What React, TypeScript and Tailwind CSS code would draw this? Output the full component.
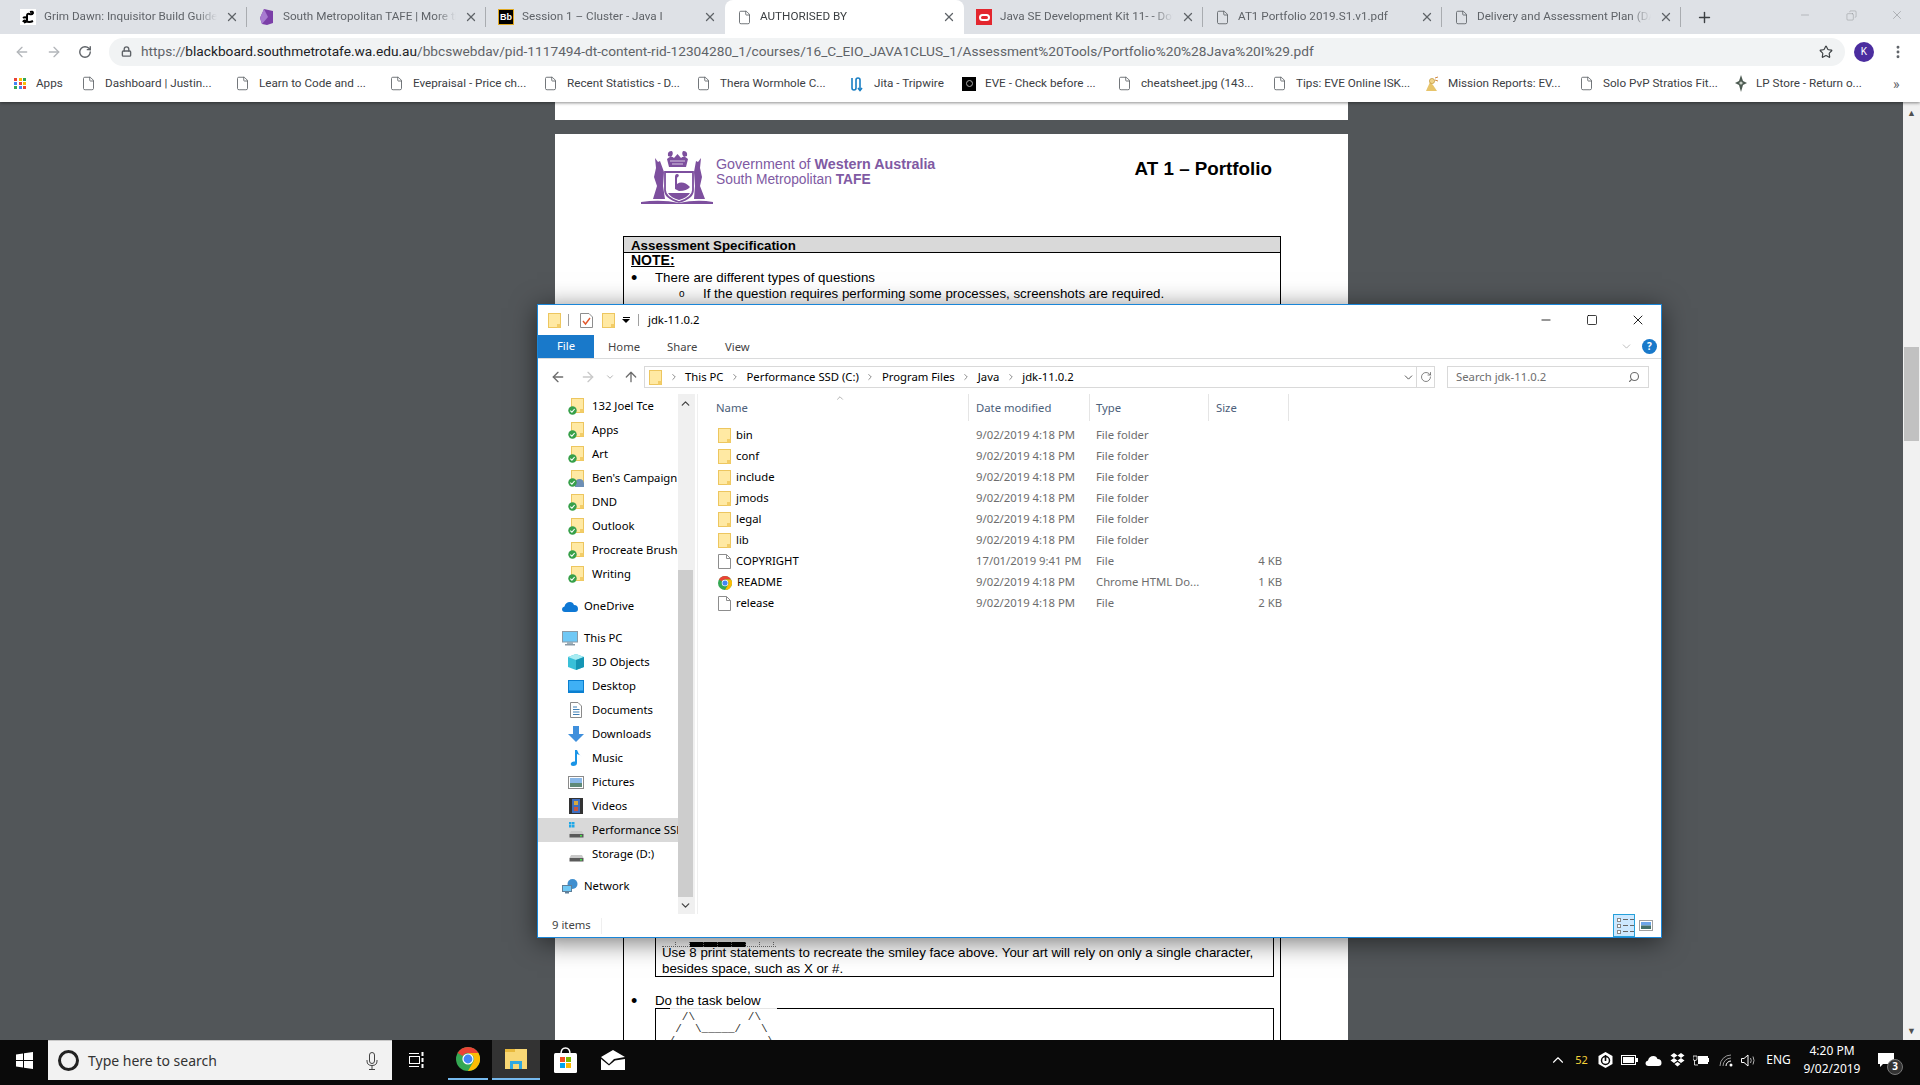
import {
  ArrowLeft,
  ArrowRight,
  ArrowUp,
  ChevronDown,
  ChevronRight,
  ChevronUp,
  Copy,
  File,
  Lock,
  Minus,
  MoreVertical,
  Plus,
  RotateCw,
  Search,
  Square,
  Star,
  X,
} from "lucide-react";
import type { ReactNode } from "react";

const chromeFont = "font-['Roboto',sans-serif]";
const winFont = "font-['Noto_Sans',sans-serif]";
const pdfFont = "font-['Liberation_Sans',Arial,sans-serif]";

function DocIcon({ className = "text-[#5f6368]" }: { className?: string }) {
  return <File size={15} strokeWidth={1.4} className={`shrink-0 ${className}`} />;
}

function GrimFav() {
  return (
    <div className="w-4 h-4 bg-white flex items-center justify-center shrink-0">
      <svg width="14" height="14" viewBox="0 0 14 14" fill="none" stroke="black" strokeWidth="2">
        <path d="M9 2 Q12 1 12 3 Q11 5 8.5 4 Q6 3 6 6 V10 Q6 12 3 12.5" />
        <path d="M2 8 Q4 6.5 6 8 M2 12 Q3 10 5 11 Q8 13 12 11" />
      </svg>
    </div>
  );
}

function TafeFav() {
  return (
    <svg width="16" height="16" viewBox="0 0 16 16" className="shrink-0">
      <path d="M5 0 L14 2 L14 14 L8 16 L3 15 L1 9 Z" fill="#7b3fa8" />
      <path d="M5 0 L9 8 L3 15 L1 9 Z" fill="#a77bd0" />
    </svg>
  );
}

function BbFav() {
  return (
    <div className="w-4 h-4 bg-black border border-[#e0a820] flex items-center justify-center shrink-0 text-white font-bold text-[9px] leading-none font-['Liberation_Sans',sans-serif]">
      Bb
    </div>
  );
}

function OracleFav() {
  return (
    <div className="w-4 h-4 bg-[#e3262e] flex items-center justify-center shrink-0">
      <div className="w-[11px] h-[7px] rounded-full border-2 border-white" />
    </div>
  );
}

const tabs: { title: string; icon: ReactNode; active?: boolean; sep?: boolean }[] = [
  { title: "Grim Dawn: Inquisitor Build Guide", icon: <GrimFav />, sep: true },
  { title: "South Metropolitan TAFE | More than", icon: <TafeFav />, sep: true },
  { title: "Session 1 – Cluster - Java I", icon: <BbFav /> },
  { title: "AUTHORISED BY", icon: <DocIcon />, active: true },
  { title: "Java SE Development Kit 11- - Downloads", icon: <OracleFav />, sep: true },
  { title: "AT1 Portfolio 2019.S1.v1.pdf", icon: <DocIcon />, sep: true },
  { title: "Delivery and Assessment Plan (DAP)", icon: <DocIcon />, sep: true },
];

function AppsGrid() {
  const colors = [
    "#ea4335", "#fbbc05", "#34a853",
    "#4285f4", "#ea4335", "#fbbc05",
    "#34a853", "#4285f4", "#ea4335",
  ];
  return (
    <div className="grid grid-cols-3 gap-[1px] w-[13px] shrink-0">
      {colors.map((c, i) => (
        <svg key={i} width="3" height="3" className="block">
          <rect width="3" height="3" fill={c} />
        </svg>
      ))}
    </div>
  );
}

function JitaIcon() {
  return (
    <svg width="16" height="16" viewBox="0 0 16 16" fill="none" stroke="#1a7fc4" strokeWidth="1.6" className="shrink-0">
      <path d="M3 2 V12 Q3 14 5 14 Q7 14 7 12 V4 Q7 2 9 2 Q11 2 11 4 V14" />
      <path d="M9 12 L11 14.5 L13 12" />
    </svg>
  );
}

function EveIcon() {
  return (
    <div className="w-[14px] h-[14px] bg-black flex items-center justify-center shrink-0">
      <div className="w-[7px] h-[7px] rounded-full border border-[#aaa]" />
    </div>
  );
}

function MissionIcon() {
  return (
    <svg width="15" height="16" viewBox="0 0 15 16" className="shrink-0">
      <path d="M2 15 L6 6 L9 9 L13 15 Z" fill="#e7c46a" />
      <circle cx="8" cy="5" r="2.6" fill="#f0d48a" stroke="#b98a2c" strokeWidth="0.6" />
      <path d="M11 2 L14 1 M11 4 L14 5" stroke="#c9792b" strokeWidth="0.9" />
    </svg>
  );
}

function LpIcon() {
  return (
    <svg width="12" height="17" viewBox="0 0 12 17" className="shrink-0">
      <path d="M6 0 L8 6 L12 8 L8 10 L6 17 L4 10 L0 8 L4 6 Z" fill="#4d5b52" />
      <circle cx="6" cy="8" r="1.6" fill="#c9d1c8" />
    </svg>
  );
}

const bookmarks: { label: string; icon: ReactNode; w: string; pl: string }[] = [
  { label: "Apps", icon: <AppsGrid />, w: "w-[68px]", pl: "pl-[6px]" },
  { label: "Dashboard | Justin...", icon: <DocIcon />, w: "w-[154px]", pl: "pl-[5px]" },
  { label: "Learn to Code and ...", icon: <DocIcon />, w: "w-[154px]", pl: "pl-[5px]" },
  { label: "Evepraisal - Price ch...", icon: <DocIcon />, w: "w-[154px]", pl: "pl-[5px]" },
  { label: "Recent Statistics - D...", icon: <DocIcon />, w: "w-[153px]", pl: "pl-[5px]" },
  { label: "Thera Wormhole C...", icon: <DocIcon />, w: "w-[154px]", pl: "pl-[5px]" },
  { label: "Jita - Tripwire", icon: <JitaIcon />, w: "w-[113px]", pl: "pl-[4px]" },
  { label: "EVE - Check before ...", icon: <EveIcon />, w: "w-[155px]", pl: "pl-[4px]" },
  { label: "cheatsheet.jpg (143...", icon: <DocIcon />, w: "w-[155px]", pl: "pl-[4px]" },
  { label: "Tips: EVE Online ISK...", icon: <DocIcon />, w: "w-[152px]", pl: "pl-[4px]" },
  { label: "Mission Reports: EV...", icon: <MissionIcon />, w: "w-[155px]", pl: "pl-[4px]" },
  { label: "Solo PvP Stratios Fit...", icon: <DocIcon />, w: "w-[158px]", pl: "pl-[4px]" },
  { label: "LP Store - Return o...", icon: <LpIcon />, w: "w-[150px]", pl: "pl-[2px]" },
];

function ChromeBar() {
  return (
    <div className={`${chromeFont} shrink-0 relative z-10 shadow-[0_1px_3px_rgba(0,0,0,0.45)]`}>
      <div className="h-[34px] bg-[#dee1e6] flex pl-2">
        {tabs.map((t) => (
          <div
            key={t.title}
            className={`w-[239px] h-[34px] flex items-center pl-3 text-[11.7px] ${
              t.active ? "bg-white rounded-t-lg text-[#3c4043]" : "text-[#5f6368]"
            }`}
          >
            {t.icon}
            <span className="ml-2 flex-1 overflow-hidden whitespace-nowrap [mask-image:linear-gradient(to_right,black_88%,transparent)]">
              {t.title}
            </span>
            <X size={14} strokeWidth={2.2} className="ml-2 shrink-0 text-[#5f6368]" />
            <div className={`ml-[7px] w-px h-[20px] shrink-0 ${t.sep ? "bg-[#a9acb0]" : ""}`} />
          </div>
        ))}
        <div className="ml-[15px] h-[34px] flex items-center">
          <Plus size={17} strokeWidth={2} className="text-[#3c4043]" />
        </div>
        <div className="ml-auto flex items-start text-[#8a8d91]">
          <div className="w-[46px] h-[30px] flex items-center justify-center">
            <Minus size={12} strokeWidth={1} />
          </div>
          <div className="w-[46px] h-[30px] flex items-center justify-center">
            <Copy size={11} strokeWidth={1} className="-scale-x-100" />
          </div>
          <div className="w-[46px] h-[30px] flex items-center justify-center">
            <X size={14} strokeWidth={1} />
          </div>
        </div>
      </div>
      <div className="h-[35px] bg-white flex items-center">
        <div className="w-[109px] flex items-center shrink-0 pl-[14px] gap-[16px]">
          <ArrowLeft size={16} strokeWidth={2} className="text-[#b3b6ba]" />
          <ArrowRight size={16} strokeWidth={2} className="text-[#b3b6ba]" />
          <RotateCw size={14} strokeWidth={2.4} className="text-[#5f6368]" />
        </div>
        <div className="w-[1736px] h-[28px] rounded-full bg-[#f1f3f4] flex items-center pl-3 pr-3 whitespace-nowrap">
          <Lock size={11} strokeWidth={3} className="text-[#5f6368] shrink-0" />
          <span className="ml-[9px] text-[13.7px] text-[#5f6368]">
            https://<span className="text-[#202124]">blackboard.southmetrotafe.wa.edu.au</span>
            /bbcswebdav/pid-1117494-dt-content-rid-12304280_1/courses/16_C_EIO_JAVA1CLUS_1/Assessment%20Tools/Portfolio%20%28Java%20I%29.pdf
          </span>
          <Star size={14} strokeWidth={2} className="ml-auto text-[#3c4043] shrink-0" />
        </div>
        <div className="ml-[9px] w-5 h-5 rounded-full bg-[#4b2d9f] text-white text-[10px] flex items-center justify-center shrink-0">
          K
        </div>
        <MoreVertical size={16} strokeWidth={2.4} className="ml-[16px] text-[#5f6368] shrink-0" />
      </div>
      <div className="h-[33px] pb-[3px] bg-white flex items-center text-[11.7px] text-[#3c4043] whitespace-nowrap pl-[8px]">
        {bookmarks.map((b) => (
          <div key={b.label} className={`${b.w} ${b.pl} flex items-center gap-[4px] shrink-0 overflow-hidden`}>
            {b.icon}
            <span className="ml-[5px]">{b.label}</span>
          </div>
        ))}
        <span className="ml-[10px] text-sm text-[#5f6368]">»</span>
      </div>
    </div>
  );
}

function Crest() {
  const c = "#7d4f9e";
  return (
    <svg width="74" height="56" viewBox="0 0 74 56" className="shrink-0">
      {/* leaves above the crown */}
      <path d="M27 6 Q26 1 31 1 Q33 4 30 7 Z M46 6 Q47 1 42 1 Q40 4 43 7 Z" fill={c} />
      {/* crown */}
      <path d="M28 17 L26 9 Q30 5 33 8 L36.5 4 L40 8 Q43 5 47 9 L45 17 Z" fill={c} />
      <path d="M29 11 H44 M31 14 H42" stroke="white" strokeWidth="0.7" />
      {/* shield */}
      <path d="M24 22 H52 V40 Q52 48 38 52 Q24 48 24 40 Z" fill="white" stroke={c} strokeWidth="1.8" />
      {/* swan */}
      <path d="M34 39 V27 Q34 24 36 24 Q38.5 24 37.5 26.5 Q36 26.5 36 29 V34 Q42 30 49 37 Q46 41 38 41 Z" fill={c} />
      <path d="M27 43 H49 Q46 48 38 50 Q30 48 27 43 Z" fill={c} />
      {/* kangaroos */}
      <path d="M14 8 L17 12 L19 11 L23 22 L22 36 L24 49 L12 49 L16 36 L13 27 L15 18 Z" fill={c} />
      <path d="M60 8 L57 12 L55 11 L53 22 L54 36 L53 49 L64 49 L59 36 L61 27 L59 18 Z" fill={c} />
      {/* ground */}
      <path d="M0 52 Q20 49 38 53 Q56 49 72 52 L72 54 H0 Z" fill={c} />
    </svg>
  );
}

function PdfViewer() {
  return (
    <div className="h-[938px] bg-[#525659] flex overflow-hidden shrink-0">
      <div className="flex-1 flex flex-col items-center min-w-0">
        <div className="w-[793px] h-[18px] bg-white shrink-0" />
        <div className={`${pdfFont} mt-[14px] w-[793px] bg-white shrink-0 h-[906px] text-black overflow-hidden`}>
          <div className="flex items-start pt-4 pl-[86px] pr-[76px] h-[71px]">
            <Crest />
            <div className="ml-[1px] mt-[7px] text-[14.3px] leading-[15px] text-[#805aa3] whitespace-nowrap">
              <div>
                Government of <b>Western Australia</b>
              </div>
              <div className="text-[13.8px]">
                South Metropolitan <b>TAFE</b>
              </div>
            </div>
            <div className="ml-auto mt-[7px] text-[18.8px] font-bold leading-[24px]">AT 1 – Portfolio</div>
          </div>
          <div className="ml-[68px] mt-[31px] w-[658px] border border-black border-b-0">
            <div className="h-[16px] bg-[#d9d9d9] border-b border-black pl-[7px] text-[13.3px] font-bold leading-[17px]">
              Assessment Specification
            </div>
            <div className="text-[13.3px] leading-[16px] pl-[7px] -mt-[3px]">
              <div className="font-bold underline text-sm">NOTE:</div>
              <div className="flex">
                <span className="w-[24px] text-lg leading-[16px]">•</span>
                <span>There are different types of questions</span>
              </div>
              <div className="flex pl-[48px]">
                <span className="w-[24px] text-[10px]">o</span>
                <span>If the question requires performing some processes, screenshots are required.</span>
              </div>
              <div className="flex pl-[48px]">
                <span className="w-[24px] text-[10px]">o</span>
                <span>If the question requires writing code, the source code files should be submitted.</span>
              </div>
              <div className="h-[603px]" />
              <div className="ml-[24px] w-[619px] h-[56px] border border-black px-[6px] pt-[20px]">
                <div className="flex h-[5px] w-[114px] border-b border-dotted border-[#777]">
                  {[0, 1, 2, 3, 4, 5, 6, 7].map((i) => (
                    <div
                      key={i}
                      className={`h-[5px] w-[14px] border-r border-dotted border-[#777] ${
                        i > 1 && i < 6 ? "bg-black" : ""
                      }`}
                    />
                  ))}
                </div>
                <div className="-mt-[2px] leading-[16px] whitespace-nowrap">
                  Use 8 print statements to recreate the smiley face above. Your art will rely on only a single character,
                  <br />
                  besides space, such as X or #.
                </div>
              </div>
              <div className="mt-[16px] flex h-[15px]">
                <span className="w-[24px] text-lg leading-[16px]">•</span>
                <span>Do the task below</span>
              </div>
              <div className="relative ml-[24px] w-[619px] h-[60px] border border-black px-[6px] pt-[2px]">
                <div className="absolute left-[14px] -top-px w-[107px] h-px bg-[#e5e5e5]" />
                <pre className="font-['Liberation_Mono',monospace] text-[11px] leading-[12px] text-[#333]">
                  {"   /\\        /\\\n  /  \\_____/   \\\n /              \\"}
                </pre>
              </div>
            </div>
          </div>
        </div>
      </div>
      <div className="w-[17px] bg-[#f1f1f1] flex flex-col items-center shrink-0 relative">
        <div className="h-[20px] flex items-center text-[#505050] text-[9px] leading-none">▲</div>
        <div className="mt-[225px] w-[15px] h-[94px] bg-[#c1c1c1]" />
        <div className="mt-auto h-[20px] flex items-center text-[#505050] text-[9px] leading-none">▼</div>
      </div>
    </div>
  );
}

function Folder({ w = 13, h = 15 }: { w?: number; h?: number }) {
  return (
    <svg width={w} height={h} viewBox="0 0 13 15" className="shrink-0">
      <rect x="0.5" y="0.5" width="12" height="14" fill="#ffe9a3" stroke="#edc65f" />
      <rect x="9" y="11" width="3.5" height="3.5" fill="#f3cd68" />
    </svg>
  );
}

function SyncFolder({ people }: { people?: boolean }) {
  return (
    <div className="relative w-[16px] h-[17px] shrink-0">
      <div className="absolute right-0 top-0">
        <Folder />
      </div>
      {people && <div className="absolute right-0 bottom-0 w-[9px] h-[8px] rounded-t-full bg-[#6d8fb5]" />}
      <svg width="9" height="9" viewBox="0 0 9 9" className="absolute left-0 bottom-0">
        <circle cx="4.5" cy="4.5" r="4.2" fill="#37a04a" />
        <path d="M2.3 4.6 L3.9 6.1 L6.6 3" stroke="white" strokeWidth="1.1" fill="none" />
      </svg>
    </div>
  );
}

function Monitor() {
  return (
    <svg width="16" height="15" viewBox="0 0 16 15" className="shrink-0">
      <rect x="0.5" y="0.5" width="15" height="10.5" fill="#6fc8f5" stroke="#8a9aa6" />
      <rect x="5" y="11" width="6" height="2" fill="#9fb0ba" />
      <rect x="3" y="13" width="10" height="1.5" fill="#8a9aa6" />
    </svg>
  );
}

function Drive({ win }: { win?: boolean }) {
  return (
    <svg width="15" height="16" viewBox="0 0 15 16" className="shrink-0">
      {win && (
        <g fill="#1fa8e8">
          <rect x="0" y="0" width="2.5" height="2.5" />
          <rect x="3" y="0" width="2.5" height="2.5" />
          <rect x="0" y="3" width="2.5" height="2.5" />
          <rect x="3" y="3" width="2.5" height="2.5" />
        </g>
      )}
      <path d="M2 9 H13 L14.5 12 H0.5 Z" fill="#c9c9c9" />
      <rect x="0.5" y="12" width="14" height="3.5" fill="#5a5a5a" />
      <rect x="11" y="13" width="2" height="1.5" fill="#4be04b" />
    </svg>
  );
}

const navFavs = ["132 Joel Tce", "Apps", "Art", "Ben's Campaign", "DND", "Outlook", "Procreate Brushes", "Writing"];

const pcItems: { label: string; icon: ReactNode; selected?: boolean }[] = [
  {
    label: "3D Objects",
    icon: (
      <svg width="16" height="16" viewBox="0 0 16 16" className="shrink-0">
        <path d="M8 0 L16 3 V13 L8 16 L0 13 V3 Z" fill="#39c0d8" />
        <path d="M8 0 L16 3 L8 6 L0 3 Z" fill="#a8ecf2" />
        <path d="M8 6 L16 3 V13 L8 16 Z" fill="#1595b4" />
      </svg>
    ),
  },
  {
    label: "Desktop",
    icon: (
      <svg width="16" height="13" viewBox="0 0 16 13" className="shrink-0">
        <rect width="16" height="13" fill="#0a7fd0" />
        <rect x="1" y="1" width="14" height="9.5" fill="#3fb0f5" />
      </svg>
    ),
  },
  {
    label: "Documents",
    icon: (
      <svg width="12" height="16" viewBox="0 0 12 16" className="shrink-0">
        <path d="M0.5 0.5 H8 L11.5 4 V15.5 H0.5 Z" fill="#fff" stroke="#8a8a8a" />
        <path d="M3 5 H7 M3 7.5 H9.5 M3 10 H9.5 M3 12.5 H9.5" stroke="#3f7fb5" />
      </svg>
    ),
  },
  {
    label: "Downloads",
    icon: (
      <svg width="16" height="16" viewBox="0 0 16 16" className="shrink-0">
        <path d="M5 0 H11 V8 H16 L8 16 L0 8 H5 Z" fill="#3f8fdc" />
      </svg>
    ),
  },
  {
    label: "Music",
    icon: (
      <svg width="13" height="16" viewBox="0 0 13 16" className="shrink-0">
        <path d="M5 0 H7 Q8 4 12 7 Q11 5 7 4 V13 Q7 16 3 16 Q0 16 1 13 Q2 11 5 11.5 Z" fill="#1a94e6" />
      </svg>
    ),
  },
  {
    label: "Pictures",
    icon: (
      <svg width="16" height="13" viewBox="0 0 16 13" className="shrink-0">
        <rect x="0.5" y="0.5" width="15" height="12" fill="#fff" stroke="#8a8a8a" />
        <rect x="2" y="2" width="12" height="5" fill="#8ab8e8" />
        <rect x="2" y="7" width="12" height="4" fill="#5f8a78" />
      </svg>
    ),
  },
  {
    label: "Videos",
    icon: (
      <svg width="14" height="16" viewBox="0 0 14 16" className="shrink-0">
        <rect width="14" height="16" fill="#333" />
        <rect x="3" y="1" width="8" height="14" fill="#3f6fc0" />
        <rect x="5" y="3" width="4" height="4" fill="#d8a83f" />
        <rect x="5" y="9" width="4" height="4" fill="#c8573f" />
      </svg>
    ),
  },
  { label: "Performance SSD (C:)", icon: <Drive win />, selected: true },
  { label: "Storage (D:)", icon: <Drive /> },
];

const files = [
  { name: "bin", date: "9/02/2019 4:18 PM", type: "File folder", size: "" },
  { name: "conf", date: "9/02/2019 4:18 PM", type: "File folder", size: "" },
  { name: "include", date: "9/02/2019 4:18 PM", type: "File folder", size: "" },
  { name: "jmods", date: "9/02/2019 4:18 PM", type: "File folder", size: "" },
  { name: "legal", date: "9/02/2019 4:18 PM", type: "File folder", size: "" },
  { name: "lib", date: "9/02/2019 4:18 PM", type: "File folder", size: "" },
  { name: "COPYRIGHT", date: "17/01/2019 9:41 PM", type: "File", size: "4 KB" },
  { name: "README", date: "9/02/2019 4:18 PM", type: "Chrome HTML Do...", size: "1 KB" },
  { name: "release", date: "9/02/2019 4:18 PM", type: "File", size: "2 KB" },
];

function ChromeLogo({ size = 14 }: { size?: number }) {
  return (
    <svg width={size} height={size} viewBox="0 0 24 24" className="shrink-0">
      <circle cx="12" cy="12" r="12" fill="#34a853" />
      <path d="M12 0 A12 12 0 0 1 22.4 6 L12 6 A6 6 0 0 0 6.8 9 L1.6 6 A12 12 0 0 1 12 0 Z" fill="#ea4335" />
      <path d="M22.4 6 A12 12 0 0 1 12 24 L17.2 15 A6 6 0 0 0 17.2 9 L12 6 Z" fill="#fbbc05" />
      <circle cx="12" cy="12" r="5.6" fill="white" />
      <circle cx="12" cy="12" r="4.4" fill="#4285f4" />
    </svg>
  );
}

function FileIcon({ name, type }: { name: string; type: string }) {
  if (type === "File folder") return <Folder />;
  if (name === "README") return <ChromeLogo />;
  return (
    <svg width="13" height="15" viewBox="0 0 13 15" className="shrink-0">
      <path d="M0.5 0.5 H8.5 L12.5 4.5 V14.5 H0.5 Z" fill="white" stroke="#8d8d8d" />
      <path d="M8.5 0.5 V4.5 H12.5" fill="none" stroke="#8d8d8d" />
    </svg>
  );
}

function NavRow({
  icon,
  label,
  indent,
  gap,
  selected,
}: {
  icon: ReactNode;
  label: string;
  indent: string;
  gap: string;
  selected?: boolean;
}) {
  return (
    <div className={`h-6 flex items-center whitespace-nowrap overflow-hidden ${indent} ${selected ? "bg-[#d9d9d9]" : ""}`}>
      <div className="w-[16px] flex justify-center shrink-0">{icon}</div>
      <span className={gap}>{label}</span>
    </div>
  );
}

const crumbs = ["This PC", "Performance SSD (C:)", "Program Files", "Java", "jdk-11.0.2"];

function ExplorerWindow() {
  return (
    <div
      className={`${winFont} absolute left-[537px] top-[304px] w-[1125px] h-[634px] bg-white border border-[#1a86d8] text-[11.3px] text-black flex flex-col shadow-[0_4px_24px_rgba(0,0,0,0.55)] z-20`}
    >
      {/* title bar */}
      <div className="h-[30px] flex items-center shrink-0">
        <div className="ml-[10px]"><Folder /></div>
        <div className="ml-[7px] w-px h-3 bg-[#a0a0a0]" />
        <svg width="13" height="15" viewBox="0 0 13 15" className="ml-[11px] shrink-0">
          <path d="M0.5 0.5 H9 L12.5 4 V14.5 H0.5 Z" fill="white" stroke="#8d8d8d" />
          <path d="M3 8 L5.5 11 L10 5" stroke="#e2572b" strokeWidth="1.4" fill="none" />
        </svg>
        <div className="ml-[9px]"><Folder /></div>
        <div className="ml-[7px] flex flex-col items-center w-[8px]">
          <div className="w-[7px] h-px bg-black mb-[1px]" />
          <div className="w-0 h-0 border-l-[4px] border-r-[4px] border-t-[4px] border-l-transparent border-r-transparent border-t-black" />
        </div>
        <div className="ml-[8px] w-px h-3 bg-[#a0a0a0]" />
        <span className="ml-[9px]">jdk-11.0.2</span>
        <div className="ml-auto flex items-center">
          <div className="w-[46px] flex justify-center"><Minus size={14} strokeWidth={1.4} /></div>
          <div className="w-[46px] flex justify-center"><Square size={12} strokeWidth={1.5} /></div>
          <div className="w-[46px] flex justify-center"><X size={16} strokeWidth={1.3} /></div>
        </div>
      </div>
      {/* ribbon tabs */}
      <div className="h-[24px] flex border-b border-[#dadbdc] shrink-0">
        <div className="w-[56px] h-[23px] bg-[#1979ca] text-white flex items-center justify-center">File</div>
        <span className="ml-[14px] w-[59px] leading-[23px] text-[#444]">Home</span>
        <span className="w-[58px] leading-[23px] text-[#444]">Share</span>
        <span className="leading-[23px] text-[#444]">View</span>
        <ChevronDown size={13} strokeWidth={1.2} className="ml-auto mt-[5px] text-[#9a9a9a]" />
        <div className="ml-[9px] mr-[4px] mt-[4px] w-[15px] h-[15px] rounded-full bg-[#1979ca] text-white font-bold text-[10px] flex items-center justify-center">
          ?
        </div>
      </div>
      {/* address row */}
      <div className="h-[35px] flex items-start pt-[7px] shrink-0">
        <div className="w-[106px] h-[21px] flex items-center pl-[12px] text-[#6d6d6d] shrink-0">
          <ArrowLeft size={16} strokeWidth={2} />
          <ArrowRight size={16} strokeWidth={2} className="ml-[14px] text-[#c9c9c9]" />
          <ChevronDown size={10} strokeWidth={1.8} className="ml-[9px] text-[#999]" />
          <ArrowUp size={16} strokeWidth={2} className="ml-[8px]" />
        </div>
        <div className="w-[791px] h-[22px] border border-[#d9d9d9] flex items-center shrink-0">
          <div className="ml-[4px]"><Folder /></div>
          {crumbs.map((c) => (
            <div key={c} className="flex items-center whitespace-nowrap">
              <ChevronRight size={10} strokeWidth={1.8} className="mx-[6.5px] text-[#666]" />
              <span>{c}</span>
            </div>
          ))}
          <ChevronDown size={13} strokeWidth={1.8} className="ml-auto text-[#555]" />
          <div className="ml-[1px] h-full w-[18px] border-l border-[#d9d9d9] flex items-center justify-center">
            <RotateCw size={12} strokeWidth={1.6} className="text-[#666]" />
          </div>
        </div>
        <div className="ml-[12px] w-[202px] h-[22px] border border-[#d9d9d9] flex items-center px-2 text-[#6d6d6d] shrink-0">
          <span>Search jdk-11.0.2</span>
          <Search size={12} strokeWidth={2.2} className="ml-auto -scale-x-100" />
        </div>
      </div>
      {/* body */}
      <div className="h-[520px] flex shrink-0 relative">
        <div className="w-[140px] overflow-hidden shrink-0">
          {navFavs.map((f) => (
            <NavRow
              key={f}
              label={f}
              indent="pl-[30px]"
              gap="ml-[8px]"
              icon={<SyncFolder people={f === "Ben's Campaign"} />}
            />
          ))}
          <div className="h-2" />
          <NavRow
            label="OneDrive"
            indent="pl-[24px]"
            gap="ml-[6px]"
            icon={
              <svg width="16" height="11" viewBox="0 0 16 11" className="shrink-0">
                <path d="M3 11 Q0 11 0 8 Q0 6 2.5 5.5 Q3.5 1 8 1 Q11 1 12 4 Q16 4 16 8 Q16 11 13 11 Z" fill="#0f78d4" />
              </svg>
            }
          />
          <div className="h-2" />
          <NavRow label="This PC" indent="pl-[24px]" gap="ml-[6px]" icon={<Monitor />} />
          {pcItems.map((p) => (
            <NavRow key={p.label} label={p.label} indent="pl-[30px]" gap="ml-[8px]" icon={p.icon} selected={p.selected} />
          ))}
          <div className="h-2" />
          <NavRow
            label="Network"
            indent="pl-[24px]"
            gap="ml-[6px]"
            icon={
              <svg width="16" height="15" viewBox="0 0 16 15" className="shrink-0">
                <circle cx="10.5" cy="5" r="5" fill="#3f8fcf" />
                <rect x="0.5" y="6.5" width="9" height="6" fill="#6fc8f5" stroke="#5f7f99" />
                <rect x="3" y="13" width="4" height="1.5" fill="#5f7f99" />
              </svg>
            }
          />
        </div>
        {/* nav scrollbar */}
        <div className="w-[17px] bg-[#f0f0f0] flex flex-col items-center shrink-0 pr-[2px]">
          <ChevronUp size={13} strokeWidth={2.4} className="mt-[3px] text-[#444]" />
          <div className="mt-[160px] w-[15px] flex-1 bg-[#cdcdcd]" />
          <div className="h-[17px] flex items-center">
            <ChevronDown size={13} strokeWidth={2.4} className="text-[#444]" />
          </div>
        </div>
        <div className="w-px bg-[#efefef] shrink-0 ml-[2px]" />
        {/* file list */}
        <div className="flex-1 min-w-0 relative">
          <ChevronUp size={10} strokeWidth={1.2} className="absolute left-[137px] top-[-1px] text-[#666]" />
          <div className="grid grid-cols-[271px_121px_119px_80px] h-[25px] text-[#4c607a] items-stretch">
            <div className="pl-[18px] border-r border-[#e5e5e5] leading-[27px]">Name</div>
            <div className="pl-[7px] border-r border-[#e5e5e5] leading-[27px]">Date modified</div>
            <div className="pl-[6px] border-r border-[#e5e5e5] leading-[27px]">Type</div>
            <div className="pl-[7px] border-r border-[#e5e5e5] leading-[27px]">Size</div>
          </div>
          <div className="mt-[6px]">
            {files.map((f) => (
              <div key={f.name} className="grid grid-cols-[271px_121px_119px_80px] h-[21px] items-center whitespace-nowrap">
                <div className="pl-[20px] flex items-center">
                  <FileIcon name={f.name} type={f.type} />
                  <span className="ml-[5px]">{f.name}</span>
                </div>
                <span className="pl-[7px] text-[#6d6d6d]">{f.date}</span>
                <span className="pl-[6px] text-[#6d6d6d]">{f.type}</span>
                <span className="pr-[7px] text-right text-[#6d6d6d]">{f.size}</span>
              </div>
            ))}
          </div>
        </div>
      </div>
      {/* status */}
      <div className="h-[23px] flex items-center shrink-0">
        <span className="ml-[14px] text-[#444]">9 items</span>
        <div className="ml-[10px] w-px h-4 bg-[#efefef]" />
        <div className="ml-auto w-[22px] h-[23px] border border-[#26a0da] bg-[#cce8ff] flex flex-col justify-center gap-[2px] pl-[3px]">
          {[0, 1, 2].map((i) => (
            <div key={i} className="flex items-center gap-[1px]">
              <div className="w-[4px] h-[4px] border border-[#888] bg-white" />
              <div className="w-[5px] h-px bg-[#666] ml-[1px]" />
              <div className="w-[4px] h-px bg-[#666] ml-[1px]" />
            </div>
          ))}
        </div>
        <svg width="14" height="11" viewBox="0 0 14 11" className="ml-[4px] mr-[8px]">
          <rect x="0.5" y="0.5" width="13" height="10" fill="white" stroke="#a0a0a0" />
          <rect x="2" y="2" width="10" height="3.5" fill="#6da5e8" />
          <rect x="2" y="5.5" width="10" height="3.5" fill="#44706a" />
        </svg>
      </div>
    </div>
  );
}

function WinLogo() {
  return (
    <svg width="17" height="17" viewBox="0 0 17 17" fill="white">
      <path d="M0 2.4 L7 1.4 V8 H0 Z" />
      <path d="M8 1.2 L17 0 V8 H8 Z" />
      <path d="M0 9 H7 V15.6 L0 14.6 Z" />
      <path d="M8 9 H17 V17 L8 15.8 Z" />
    </svg>
  );
}

function Taskbar() {
  return (
    <div className="h-[45px] bg-[#0a0a0a] flex items-start shrink-0 relative z-30 font-['Noto_Sans',sans-serif] text-white">
      <div className="w-12 h-10 flex items-center justify-center"><WinLogo /></div>
      <div className="w-[344px] h-10 bg-[#f2f2f2] flex items-center pl-[10px] pr-[14px] text-[#333] text-sm border-t border-[#c8c8c8]">
        <div className="w-[21px] h-[21px] rounded-full border-[3px] border-[#222]" />
        <span className="ml-[9px]">Type here to search</span>
        <svg width="12" height="18" viewBox="0 0 12 18" fill="none" stroke="#444" className="ml-auto">
          <rect x="3.5" y="0.5" width="5" height="11" rx="2.5" />
          <path d="M1 8 V9 Q1 13.5 6 13.5 Q11 13.5 11 9 V8 M6 13.5 V17 M3 17.5 H9" />
        </svg>
      </div>
      <div className="w-[52px] h-10 flex items-center justify-center pr-1">
        <svg width="17" height="18" viewBox="0 0 17 18" fill="none" stroke="white">
          <rect x="1.5" y="5.5" width="10" height="7" />
          <path d="M1 2.5 H11 M1 15.5 H11" />
          <path d="M14.5 1 V5 M14.5 7 V11 M14.5 13 V17" strokeWidth="2" />
        </svg>
      </div>
      <div className="w-12 h-10 flex flex-col items-center justify-end pr-[1px]">
        <div className="flex-1 flex items-center"><ChromeLogo size={24} /></div>
        <div className="w-[40px] h-[2px] bg-[#76b9ed]" />
      </div>
      <div className="w-12 h-10 bg-[#333] flex flex-col items-center">
        <div className="flex-1 flex items-center">
          <svg width="22" height="24" viewBox="0 0 22 24">
            <rect x="0" y="2" width="22" height="20" fill="#f8d775" />
            <rect x="0" y="2" width="10" height="3" fill="#e8b93c" />
            <path d="M5 22 V14 H17 V22 H14 V17 H8 V22 Z" fill="#2fa8e0" />
          </svg>
        </div>
        <div className="w-full h-[2px] bg-[#76b9ed]" />
      </div>
      <div className="w-12 h-10 flex items-center justify-center pl-[2px]">
        <svg width="23" height="26" viewBox="0 0 23 26">
          <path d="M7 7 Q7 1 11.5 1 Q16 1 16 7" stroke="white" strokeWidth="1.5" fill="none" />
          <rect x="0" y="6" width="23" height="20" rx="1.5" fill="white" />
          <rect x="6" y="10" width="5" height="5" fill="#f25022" />
          <rect x="12" y="10" width="5" height="5" fill="#7fba00" />
          <rect x="6" y="16" width="5" height="5" fill="#00a4ef" />
          <rect x="12" y="16" width="5" height="5" fill="#ffb900" />
        </svg>
      </div>
      <div className="w-12 h-10 flex items-center justify-center pl-[2px]">
        <svg width="24" height="20" viewBox="0 0 24 20" fill="white">
          <path d="M0 7 L12 0 L24 7 L13 9 L8 14 Z" />
          <path d="M0 9 L8 15.5 L14 10.5 L24 9 V20 H0 Z" />
        </svg>
      </div>
      <div className="ml-auto flex items-center h-10 text-xs">
        <div className="w-6 flex justify-center"><ChevronUp size={18} strokeWidth={1.5} /></div>
        <div className="w-[23px] text-center text-[#f5d33a] text-[11px]">52</div>
        <div className="w-6 flex justify-center">
          <svg width="15" height="16" viewBox="0 0 15 16">
            <path d="M7.5 0 L14.5 4 V12 L7.5 16 L0.5 12 V4 Z" fill="white" />
            <circle cx="7.5" cy="8.5" r="4" fill="none" stroke="#0a0a0a" strokeWidth="1.5" />
            <rect x="6.7" y="3" width="1.6" height="6" fill="#0a0a0a" />
          </svg>
        </div>
        <div className="w-6 flex justify-center">
          <svg width="17" height="10" viewBox="0 0 17 10">
            <rect x="0.5" y="0.5" width="14" height="9" fill="none" stroke="white" />
            <rect x="2" y="2" width="11" height="6" fill="white" />
            <rect x="15" y="3" width="2" height="4" fill="white" />
          </svg>
        </div>
        <div className="w-6 flex justify-center">
          <svg width="17" height="11" viewBox="0 0 16 11">
            <path d="M3 11 Q0 11 0 8 Q0 6 2.5 5.5 Q3.5 1 8 1 Q11 1 12 4 Q16 4 16 8 Q16 11 13 11 Z" fill="white" />
          </svg>
        </div>
        <div className="w-6 flex justify-center">
          <svg width="15" height="14" viewBox="0 0 15 14" fill="white">
            <path d="M4 0 L7.5 2.5 L4 5 L0.5 2.5 Z M11 0 L14.5 2.5 L11 5 L7.5 2.5 Z M4 5 L7.5 7.5 L4 10 L0.5 7.5 Z M11 5 L14.5 7.5 L11 10 L7.5 7.5 Z M4.5 11 L7.5 9 L10.5 11 L7.5 13.5 Z" />
          </svg>
        </div>
        <div className="w-6 flex justify-center">
          <svg width="16" height="12" viewBox="0 0 16 12" fill="white">
            <rect x="5" y="2" width="10" height="8" />
            <rect x="15" y="4" width="1" height="4" />
            <path d="M0 2 H4 V5 Q4 6.5 2 6.5 Q0 6.5 0 5 Z M1.5 6 V11 H5" stroke="white" strokeWidth="0.8" fill="none" />
          </svg>
        </div>
        <div className="w-[25px] flex justify-center">
          <svg width="14" height="13" viewBox="0 0 14 13" fill="none" stroke="#9a9a9a">
            <path d="M1 12 A11 11 0 0 1 12 1 M4 12 A8 8 0 0 1 12 4" />
            <path d="M7 12 A5 5 0 0 1 12 7" stroke="white" />
            <circle cx="12" cy="11" r="1.5" fill="white" stroke="none" />
          </svg>
        </div>
        <div className="w-[21px] flex justify-center">
          <svg width="16" height="13" viewBox="0 0 16 13" fill="none" stroke="white">
            <path d="M0.5 4.5 H3 L7 1 V12 L3 8.5 H0.5 Z" />
            <path d="M9.5 4 Q11 6.5 9.5 9 M12 2.5 Q14 6.5 12 10.5" stroke="#b0b0b0" />
          </svg>
        </div>
        <div className="w-[39px] text-center">ENG</div>
        <div className="w-[68px] text-center text-xs leading-[18px]">
          <div>4:20 PM</div>
          <div>9/02/2019</div>
        </div>
        <div className="w-[54px] pl-3 relative h-full flex items-center">
          <svg width="18" height="14" viewBox="0 0 18 14" fill="white">
            <path d="M0 0 H16 V11 H5 L2 14 V11 H0 Z" />
          </svg>
          <div className="absolute left-[21px] top-[19px] w-[16px] h-[16px] rounded-full bg-[#333] border border-[#777] text-[10px] font-bold flex items-center justify-center">
            3
          </div>
        </div>
      </div>
    </div>
  );
}

export default function App() {
  return (
    <div className="relative w-[1920px] h-[1085px] overflow-hidden flex flex-col">
      <ChromeBar />
      <PdfViewer />
      <Taskbar />
      <ExplorerWindow />
    </div>
  );
}
